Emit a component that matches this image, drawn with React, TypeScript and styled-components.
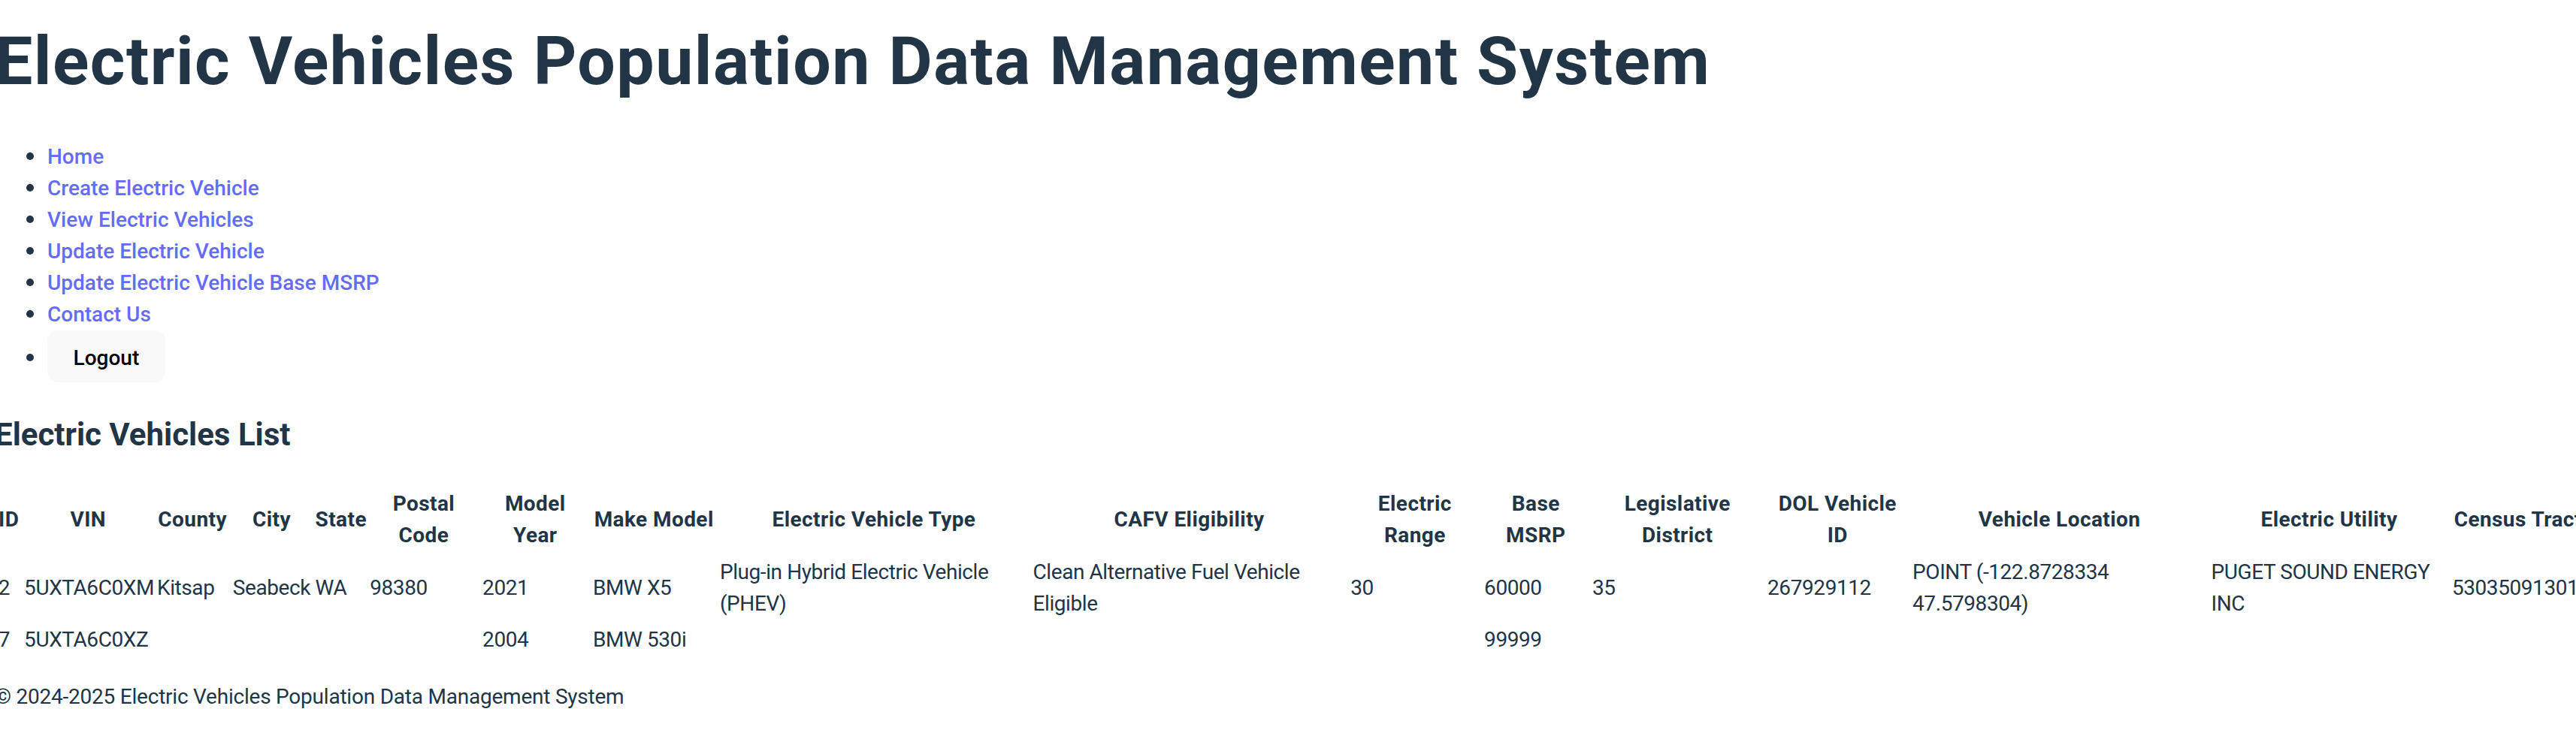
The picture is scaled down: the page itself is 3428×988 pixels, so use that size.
import styled, { createGlobalStyle } from "styled-components";

const GlobalStyle = createGlobalStyle`
  html, body {
    margin: 0;
    overflow: hidden;
    background: #ffffff;
  }
  body {
    font-family: Roboto, "Noto Sans", sans-serif;
    font-size: 28px;
    line-height: 1.5;
    color: #213547;
  }
`;

const Page = styled.div`
  margin-left: -7px;
`;

const Title = styled.h1`
  margin: 33px 0 0;
  font-size: 89.6px;
  line-height: 1.1;
  font-weight: 700;
  letter-spacing: 0.016em;
  white-space: nowrap;
`;

const NavList = styled.ul`
  margin: 56px 0 0;
  padding-left: 70px;
  list-style: none;
`;

const NavItem = styled.li`
  &::before {
    content: "";
    display: inline-block;
    width: 10px;
    height: 10px;
    border-radius: 50%;
    background: #213547;
    vertical-align: 5px;
    margin: 0 18px 0 -28px;
  }
`;

const NavLink = styled.a`
  color: #646cff;
  font-weight: 500;
  text-decoration: none;
`;

const LogoutButton = styled.button`
  font-family: inherit;
  font-size: 28px;
  font-weight: 500;
  line-height: 36px;
  color: #000000;
  background: #f9f9f9;
  border: 1.75px solid transparent;
  border-radius: 14px;
  padding: 18px 33.6px 13px;
  cursor: pointer;
`;

const SectionTitle = styled.h2`
  margin: 38px 0 0;
  font-size: 42px;
  line-height: 1.5;
  font-weight: 700;
  white-space: nowrap;
`;

const Table = styled.table<{ $width: number }>`
  margin-top: 36px;
  border-collapse: separate;
  border-spacing: 3.5px;
  table-layout: fixed;
  width: ${(p) => p.$width}px;
`;

const HeadCell = styled.th<{ $w: number }>`
  width: ${(p) => p.$w}px;
  padding: 1.75px;
  font-weight: 700;
  text-align: center;
  vertical-align: middle;
  white-space: nowrap;
  letter-spacing: 0.015em;
`;

const Cell = styled.td`
  padding: 1.75px;
  text-align: left;
  vertical-align: middle;
  letter-spacing: -0.015em;
`;

const Footer = styled.footer`
  margin-top: 29px;
  white-space: nowrap;
  letter-spacing: -0.008em;
`;

const links = [
  "Home",
  "Create Electric Vehicle",
  "View Electric Vehicles",
  "Update Electric Vehicle",
  "Update Electric Vehicle Base MSRP",
  "Contact Us",
];

const columns: { label: string[]; w: number }[] = [
  { label: ["ID"], w: 27.75 },
  { label: ["VIN"], w: 170 },
  { label: ["County"], w: 94 },
  { label: ["City"], w: 103 },
  { label: ["State"], w: 66 },
  { label: ["Postal", "Code"], w: 143 },
  { label: ["Model", "Year"], w: 140 },
  { label: ["Make Model"], w: 162 },
  { label: ["Electric Vehicle Type"], w: 409 },
  { label: ["CAFV Eligibility"], w: 415 },
  { label: ["Electric", "Range"], w: 171 },
  { label: ["Base", "MSRP"], w: 137 },
  { label: ["Legislative", "District"], w: 226 },
  { label: ["DOL Vehicle", "ID"], w: 186 },
  { label: ["Vehicle Location"], w: 390 },
  { label: ["Electric Utility"], w: 313 },
  { label: ["Census Tract"], w: 175 },
];

const vehicles: string[][] = [
  [
    "2",
    "5UXTA6C0XM",
    "Kitsap",
    "Seabeck",
    "WA",
    "98380",
    "2021",
    "BMW X5",
    "Plug-in Hybrid Electric Vehicle (PHEV)",
    "Clean Alternative Fuel Vehicle Eligible",
    "30",
    "60000",
    "35",
    "267929112",
    "POINT (-122.8728334 47.5798304)",
    "PUGET SOUND ENERGY INC",
    "53035091301",
  ],
  ["7", "5UXTA6C0XZ", "", "", "", "", "2004", "BMW 530i", "", "", "", "99999", "", "", "", "", ""],
];

const CELL_GAP = 3.5;
const CELL_PAD = 3.5;

const App = () => {
  const tableWidth =
    columns.reduce((sum, c) => sum + c.w + CELL_PAD, 0) + CELL_GAP * (columns.length + 1);

  return (
    <>
      <GlobalStyle />
      <Page>
        <Title>Electric Vehicles Population Data Management System</Title>
        <nav>
          <NavList>
            {links.map((l) => (
              <NavItem key={l}>
                <NavLink href="#">{l}</NavLink>
              </NavItem>
            ))}
            <NavItem>
              <LogoutButton>Logout</LogoutButton>
            </NavItem>
          </NavList>
        </nav>
        <SectionTitle>Electric Vehicles List</SectionTitle>
        <Table $width={tableWidth}>
          <thead>
            <tr>
              {columns.map((c) => (
                <HeadCell key={c.label.join(" ")} $w={c.w}>
                  {c.label.map((line, i) => (
                    <span key={line}>
                      {i > 0 && <br />}
                      {line}
                    </span>
                  ))}
                </HeadCell>
              ))}
            </tr>
          </thead>
          <tbody>
            {vehicles.map((v) => (
              <tr key={v[0]}>
                {v.map((value, i) => (
                  <Cell key={i}>{value}</Cell>
                ))}
              </tr>
            ))}
          </tbody>
        </Table>
        <Footer>© 2024-2025 Electric Vehicles Population Data Management System</Footer>
      </Page>
    </>
  );
};

export default App;
